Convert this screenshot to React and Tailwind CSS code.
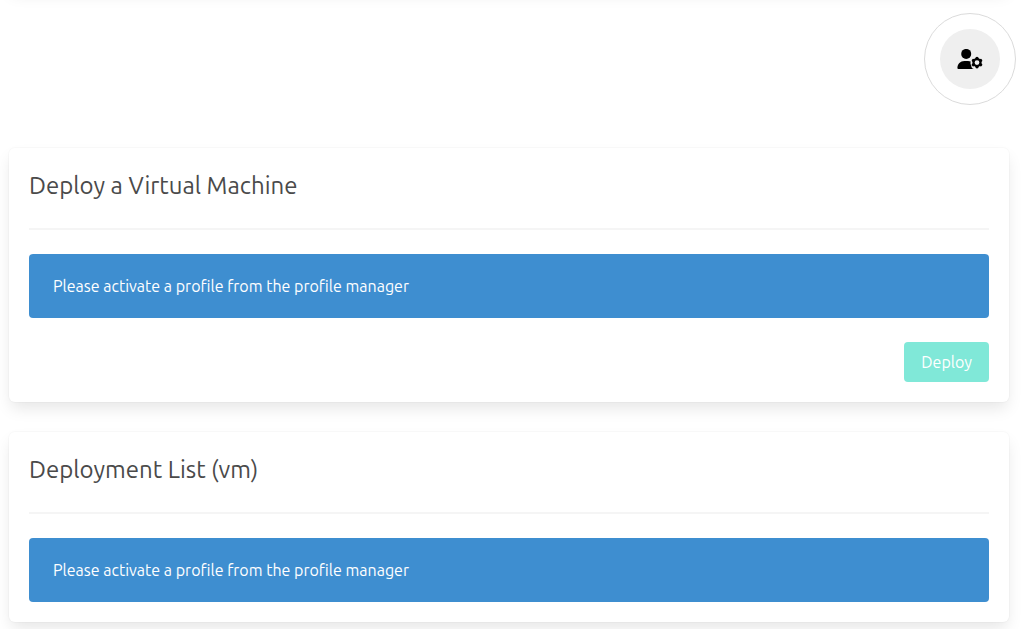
function UserGearIcon({ className }) {
  return (
    <svg viewBox="0 0 26 20" className={className} aria-hidden="true">
      <circle cx="9.2" cy="4.9" r="5" fill="currentColor" />
      <path
        d="M1.3 20C.8 20 .4 19.600 .4 19.100C.4 15 3.400 11.900 7.400 11.900H11c1 0 1.900.2 2.700.5c-.5 1.600-.2 3.100.7 4.300c-.3 1.300.4 2.600 2.400 3.300Z"
        fill="currentColor"
      />
      <circle cx="20" cy="13.600" r="3.500" fill="none" stroke="currentColor" strokeWidth="2.200" />
      <g fill="currentColor">
        {[0, 60, 120, 180, 240, 300].map((angle) => (
          <path
            key={angle}
            d="M18.200 10.600L18.700 8.200Q20 7.300 21.300 8.200L21.800 10.600Z"
            transform={`rotate(${angle} 20 13.6)`}
          />
        ))}
      </g>
    </svg>
  );
}

function Box({ title, children }) {
  return (
    <section className="rounded-md bg-white p-5 shadow-[0_8px_16px_-2px_rgba(10,10,10,0.1),0_0_0_1px_rgba(10,10,10,0.02)]">
      <h2 className="text-2xl leading-9">{title}</h2>
      <hr className="my-6 h-0.5 border-0 bg-[#f5f5f5]" />
      {children}
    </section>
  );
}

function Notification({ children }) {
  return (
    <p className="rounded-sm bg-[#3e8ed0] py-5 pr-10 pl-6 leading-6 text-white">
      {children}
    </p>
  );
}

export default function App() {
  return (
    <div className="overflow-hidden bg-white pb-5 font-['Ubuntu','Noto_Sans',sans-serif] text-base text-[#4a4a4a]">
      <div className="mr-3 -mt-7 ml-[9px] h-4 rounded-md shadow-[0_8px_16px_-2px_rgba(10,10,10,0.1)]" />
      <header className="flex justify-end pt-[25px] pr-[5px]">
        <div className="rounded-full border border-[#dbdbdb] p-[15px]">
          <button
            type="button"
            aria-label="Profile manager"
            className="flex size-15 items-center justify-center rounded-full bg-[#efefef] text-black"
          >
            <UserGearIcon className="h-5 w-[26px]" />
          </button>
        </div>
      </header>
      <main className="mt-[43px] mr-3 ml-[9px] flex flex-col gap-[30px]">
        <Box title="Deploy a Virtual Machine">
          <Notification>Please activate a profile from the profile manager</Notification>
          <div className="mt-6 flex justify-end">
            <button
              type="button"
              disabled
              className="h-10 cursor-not-allowed rounded-sm border border-transparent bg-[#80e8d8] px-4 text-white"
            >
              Deploy
            </button>
          </div>
        </Box>
        <Box title="Deployment List (vm)">
          <Notification>Please activate a profile from the profile manager</Notification>
        </Box>
      </main>
    </div>
  );
}
